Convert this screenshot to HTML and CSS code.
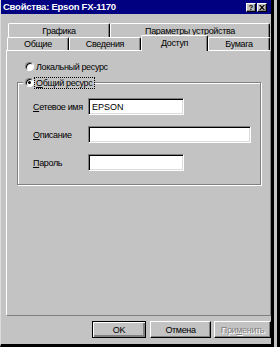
FILE: index.html
```html
<!DOCTYPE html>
<html lang="ru">
<head>
<meta charset="utf-8">
<title>Свойства: Epson FX-1170</title>
<link rel="stylesheet" href="styles.css">
</head>
<body>
<div class="screen">
  <div class="window">
    <div class="titlebar">
      <span class="title">Свойства: Epson FX-1170</span>
      <div class="tbuttons">
        <span class="tbtn help">?</span>
        <span class="tbtn close"><svg width="6" height="5" viewBox="0 0 6 5"><path d="M0 0h1.5L3 1.6 4.5 0H6L3.8 2.5 6 5H4.5L3 3.4 1.5 5H0l2.2-2.5z" fill="#000"/></svg></span>
      </div>
    </div>
    <div class="tabs">
      <div class="tabrow back">
        <div class="tab t-graph">Графика</div>
        <div class="tab t-params">Параметры устройства</div>
      </div>
      <div class="tabrow front">
        <div class="tab t-general">Общие</div>
        <div class="tab t-info">Сведения</div>
        <div class="tab t-access selected">Доступ</div>
        <div class="tab t-paper">Бумага</div>
      </div>
    </div>
    <div class="panel">
      <div class="radiorow">
        <span class="radio"></span>
        <span class="rlabel">Локальный ресурс</span>
      </div>
      <fieldset class="group">
        <legend class="legend">
          <span class="radio checked"></span>
          <span class="rlabel focus"><u>О</u>бщий ресурс</span>
        </legend>
        <div class="frow">
          <span class="flabel"><u>С</u>етевое имя</span>
          <div class="field short">EPSON</div>
        </div>
        <div class="frow">
          <span class="flabel"><u>О</u>писание</span>
          <div class="field long"></div>
        </div>
        <div class="frow">
          <span class="flabel"><u>П</u>ароль</span>
          <div class="field short"></div>
        </div>
      </fieldset>
    </div>
    <div class="buttons">
      <div class="btn default b-ok"><span>OK</span></div>
      <div class="btn b-cancel"><span>Отмена</span></div>
      <div class="btn b-apply disabled"><span>При<u>м</u>енить</span></div>
    </div>
  </div>
  <div class="edge"></div>
</div>
</body>
</html>
```

FILE: styles.css
```css
html, body {
  margin: 0;
  padding: 0;
  background: #c3c3c3;
}
body {
  font-family: "Liberation Sans", Arial, sans-serif;
  font-size: 9px;
  letter-spacing: -0.35px;
  color: #000;
}
u { text-decoration: underline; text-underline-offset: 1px; }

.screen {
  display: flex;
  width: 280px;
  height: 347px;
  overflow: hidden;
}

.window {
  box-sizing: border-box;
  width: 274px;
  height: 347px;
  border-left: 1px solid #dcdcdc;
  border-right: 3px solid #000;
  border-bottom: 3px solid #000;
  display: flex;
  flex-direction: column;
  background: #c3c3c3;
}

.edge {
  box-sizing: border-box;
  width: 6px;
  height: 347px;
  border-right: 3px solid #000;
  background: #c3c3c3;
}

/* title bar */
.titlebar {
  height: 14px;
  background: #000080;
  color: #fff;
  display: flex;
  align-items: center;
  justify-content: space-between;
  padding: 0 4px 0 2px;
}
.title {
  font-weight: bold;
  font-size: 9.5px;
  letter-spacing: -0.25px;
  line-height: 14px;
}
.tbuttons {
  display: flex;
  gap: 1px;
}
.tbtn {
  box-sizing: border-box;
  width: 10px;
  height: 9px;
  background: #c3c3c3;
  border-top: 1px solid #fff;
  border-left: 1px solid #fff;
  border-right: 1px solid #000;
  border-bottom: 1px solid #000;
  box-shadow: inset -1px -1px #808080;
  display: flex;
  align-items: center;
  justify-content: center;
  color: #000;
  font-weight: bold;
  font-size: 8px;
  line-height: 7px;
  letter-spacing: 0;
}

/* tabs */
.tabs {
  margin-top: 9px;
  display: flex;
  flex-direction: column;
}
.tabrow {
  display: flex;
}
.tabrow.back {
  padding-left: 7px;
  height: 14px;
}
.tabrow.front {
  padding-left: 6px;
  height: 13px;
}
.tab {
  box-sizing: border-box;
  height: 100%;
  border-top: 1px solid #fff;
  border-left: 1px solid #fff;
  border-right: 1px solid #000;
  box-shadow: inset -1px 0 #808080;
  border-radius: 2px 2px 0 0;
  display: flex;
  align-items: center;
  justify-content: center;
  background: #c3c3c3;
  white-space: nowrap;
}
.t-graph { width: 102px; }
.t-params { width: 160px; }
.t-general { width: 62px; }
.t-info { width: 72px; }
.t-access { width: 67px; }
.t-paper { width: 62px; }

.tab.selected {
  height: 16px;
  margin-top: -2px;
  margin-bottom: -1px;
  position: relative;
  z-index: 1;
  padding-bottom: 1px;
}

/* panel */
.panel {
  box-sizing: border-box;
  margin-left: 5px;
  height: 266px;
  border-top: 1px solid #fff;
  border-left: 1px solid #fff;
  border-right: 1px solid #808080;
  border-bottom: 1px solid #808080;
  padding-top: 11px;
  display: flex;
  flex-direction: column;
}

.radiorow {
  display: flex;
  align-items: center;
  height: 9px;
  padding-left: 18px;
}
.radio {
  box-sizing: border-box;
  width: 9px;
  height: 9px;
  border-radius: 50%;
  background: #fff;
  border: 1px solid;
  border-color: #808080 #fff #fff #808080;
  box-shadow: inset 1px 1px #000;
  display: flex;
  align-items: center;
  justify-content: center;
  flex: none;
}
.radio.checked::after {
  content: "";
  width: 3px;
  height: 3px;
  border-radius: 50%;
  background: #000;
}
.rlabel {
  margin-left: 2px;
  line-height: 10px;
  white-space: nowrap;
}
.rlabel.focus {
  outline: 1px dotted #000;
  outline-offset: 0;
  padding: 0 2px 0 1px;
  margin-left: 1px;
}

.group {
  margin: 6px 9px 0 10px;
  padding: 10px 0 13px 0;
  border: 1px solid #808080;
  box-shadow: 1px 1px 0 #fff, inset 1px 1px 0 #fff;
  display: flex;
  flex-direction: column;
  gap: 11px;
  min-width: 0;
}
.legend {
  margin-left: 5px;
  padding: 0 1px 0 2px;
  display: flex;
  align-items: center;
  height: 11px;
  background: #c3c3c3;
}

.frow {
  display: flex;
  align-items: center;
  padding-left: 15px;
  height: 17px;
}
.flabel {
  width: 55px;
  flex: none;
  white-space: nowrap;
}
.field {
  box-sizing: border-box;
  height: 17px;
  background: #fff;
  border-top: 1px solid #808080;
  border-left: 1px solid #808080;
  border-right: 1px solid #fff;
  border-bottom: 1px solid #fff;
  box-shadow: inset 1px 1px #000, inset -1px -1px #dcdcdc;
  padding-left: 3px;
  display: flex;
  align-items: center;
  letter-spacing: 0;
}
.field.short { width: 96px; }
.field.long { width: 163px; }

/* buttons */
.buttons {
  margin-top: 5px;
  display: flex;
  justify-content: flex-end;
  height: 17px;
}
.btn {
  box-sizing: border-box;
  height: 17px;
  border-top: 1px solid #fff;
  border-left: 1px solid #fff;
  border-right: 1px solid #000;
  border-bottom: 1px solid #000;
  box-shadow: inset -1px -1px #808080;
  display: flex;
  align-items: center;
  justify-content: center;
}
.btn.default {
  border: 1px solid #000;
  box-shadow: inset 1px 1px #fff, inset -2px -2px #808080;
}
.b-ok { width: 54px; }
.b-cancel { width: 61px; margin-left: 4px; }
.b-apply { width: 57px; margin-left: 3px; }
.btn.disabled {
  color: #808080;
  text-shadow: 1px 1px 0 #fff;
}
```
